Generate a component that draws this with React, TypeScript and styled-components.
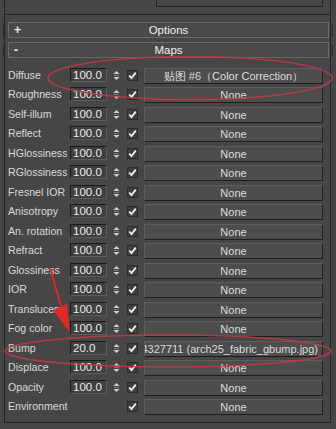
import React from 'react';
import styled, { createGlobalStyle } from 'styled-components';

const Global = createGlobalStyle`
  html, body { margin: 0; padding: 0; background: #464646; }
  body {
    font-family: "Liberation Sans", Arial, sans-serif;
    font-size: 11px;
    color: #dcdcdc;
  }
`;

const Page = styled.div`
  position: relative;
  width: 336px;
  height: 429px;
  overflow: hidden;
  background: #464646;
  padding-left: 4px;
  box-sizing: border-box;
`;

const Frame = styled.div`
  width: 327px;
  height: 423px;
  box-sizing: border-box;
  border-left: 1px solid #262626;
  border-right: 1px solid #262626;
  border-bottom: 1px solid #262626;
  display: flex;
  flex-direction: column;
`;

const PrevRollout = styled.div`
  height: 14px;
  border-bottom: 1px solid #262626;
  display: flex;
`;

const InnerBox = styled.div`
  margin-left: 151px;
  width: 165px;
  height: 6px;
  box-sizing: content-box;
  border: 1px solid #222;
  border-top: none;
`;

const Header = styled.div<{ $top: number }>`
  margin: ${(p) => p.$top}px 0 0 3px;
  width: 321px;
  height: 16px;
  box-sizing: border-box;
  border: 1px solid #6a6a6a;
  background: #494949;
  color: #f0f0f0;
  display: flex;
  align-items: center;
  position: relative;
  font-size: 11.5px;

  &::before,
  &::after {
    content: '';
    position: absolute;
    top: 2px;
    width: 2px;
    height: 9px;
    border: 1px solid #2a2a2a;
  }
  &::before {
    left: -6px;
    border-right: none;
  }
  &::after {
    right: -5px;
    border-left: none;
  }
`;

const Sign = styled.span`
  position: absolute;
  left: 5px;
  top: 0;
  line-height: 14px;
  font-weight: bold;
  font-size: 12px;
`;

const HeaderTitle = styled.span`
  flex: 1;
  text-align: center;
  line-height: 14px;
`;

const List = styled.div`
  margin-top: 9px;
  display: flex;
  flex-direction: column;
`;

const Row = styled.div`
  height: 19.47px;
  display: flex;
  align-items: flex-start;
  padding: 1px 0 0 3px;
  box-sizing: border-box;
`;

const Label = styled.div<{ $wide?: boolean }>`
  width: ${(p) => (p.$wide ? 113 : 59)}px;
  margin-right: ${(p) => (p.$wide ? 0 : 3)}px;
  height: 15px;
  line-height: 15px;
  font-size: 10.6px;
  white-space: nowrap;
  overflow: hidden;
  color: #dadada;
`;

const NumberBox = styled.div`
  width: 37px;
  height: 14px;
  box-sizing: border-box;
  border-top: 1px solid #1a1a1a;
  border-left: 1px solid #1a1a1a;
  border-bottom: 1px solid #5c5c5c;
  border-right: 1px solid #5c5c5c;
  background: #404040;
  color: #ececec;
  padding-left: 2px;
  line-height: 12px;
  font-size: 11.5px;
  white-space: nowrap;
  overflow: hidden;
`;

const Spinner = styled.div`
  margin-left: 5px;
  width: 9px;
  height: 15px;
  display: flex;
`;

const Check = styled.div`
  margin-left: 6px;
  margin-top: 2px;
  width: 11px;
  height: 11px;
  box-sizing: border-box;
  border: 1px solid #2a2a2a;
  background: #3e3e3e;
  display: flex;
  align-items: center;
  justify-content: center;
`;

const MapButton = styled.div<{ $align?: 'center' | 'end' }>`
  margin-left: 6px;
  width: 179px;
  height: 16px;
  box-sizing: border-box;
  border-top: 1px solid #5e5e5e;
  border-left: 1px solid #5e5e5e;
  border-bottom: 1px solid #1e1e1e;
  border-right: 1px solid #1e1e1e;
  background: #4d4d4d;
  color: #dcdcdc;
  display: flex;
  align-items: center;
  justify-content: ${(p) => (p.$align === 'end' ? 'flex-end' : 'center')};
  padding-right: ${(p) => (p.$align === 'end' ? '4px' : '0')};
  overflow: hidden;
  white-space: nowrap;
  line-height: 14px;
`;

const Overlay = styled.svg`
  position: absolute;
  left: 0;
  top: 0;
  pointer-events: none;
`;

const SpinIcon = () => (
  <svg width="9" height="15" viewBox="0 0 9 15">
    <path d="M1.5 6 L4.5 3 L7.5 6 Z" fill="#d0d0d0" />
    <path d="M1.5 9 L4.5 12 L7.5 9 Z" fill="#d0d0d0" />
    <line x1="2" y1="7.5" x2="7" y2="7.5" stroke="#777" strokeWidth="1" />
  </svg>
);

const CheckIcon = () => (
  <svg width="9" height="9" viewBox="0 0 9 9">
    <path d="M1.2 4.5 L3.5 7 L7.8 1.6" stroke="#f2f2f2" strokeWidth="1.8" fill="none" />
  </svg>
);

type MapRow = { label: string; value?: string; map?: string; align?: 'center' | 'end' };

const rows: MapRow[] = [
  { label: 'Diffuse', value: '100.0', map: '贴图 #6（Color Correction）' },
  { label: 'Roughness', value: '100.0' },
  { label: 'Self-illum', value: '100.0' },
  { label: 'Reflect', value: '100.0' },
  { label: 'HGlossiness', value: '100.0' },
  { label: 'RGlossiness', value: '100.0' },
  { label: 'Fresnel IOR', value: '100.0' },
  { label: 'Anisotropy', value: '100.0' },
  { label: 'An. rotation', value: '100.0' },
  { label: 'Refract', value: '100.0' },
  { label: 'Glossiness', value: '100.0' },
  { label: 'IOR', value: '100.0' },
  { label: 'Translucency', value: '100.0' },
  { label: 'Fog color', value: '100.0' },
  { label: 'Bump', value: '20.0', map: 'Map #14327711 (arch25_fabric_gbump.jpg)', align: 'end' },
  { label: 'Displace', value: '100.0' },
  { label: 'Opacity', value: '100.0' },
  { label: 'Environment' },
];

export default function App() {
  return (
    <>
      <Global />
      <Page>
        <Frame>
          <PrevRollout>
            <InnerBox />
          </PrevRollout>
          <Header $top={7}>
            <Sign>+</Sign>
            <HeaderTitle>Options</HeaderTitle>
          </Header>
          <Header $top={4}>
            <Sign>-</Sign>
            <HeaderTitle>Maps</HeaderTitle>
          </Header>
          <List>
            {rows.map((r) => (
              <Row key={r.label}>
                <Label $wide={!r.value}>{r.label}</Label>
                {r.value && (
                  <>
                    <NumberBox>{r.value}</NumberBox>
                    <Spinner>
                      <SpinIcon />
                    </Spinner>
                  </>
                )}
                <Check>
                  <CheckIcon />
                </Check>
                <MapButton $align={r.align}>{r.map ?? 'None'}</MapButton>
              </Row>
            ))}
          </List>
        </Frame>
        <Overlay width="336" height="429" viewBox="0 0 336 429">
          <ellipse cx="190" cy="78" rx="142" ry="21.5" fill="none" stroke="#c23a48" strokeOpacity="0.85" strokeWidth="1.6" />
          <ellipse cx="168" cy="351" rx="163" ry="16" fill="none" stroke="#c23a48" strokeOpacity="0.85" strokeWidth="1.6" />
          <line x1="50" y1="268" x2="61" y2="306" stroke="#e02828" strokeWidth="2" />
          <path d="M53 310 L67 304 L70 333 Z" fill="#e02828" />
        </Overlay>
      </Page>
    </>
  );
}
